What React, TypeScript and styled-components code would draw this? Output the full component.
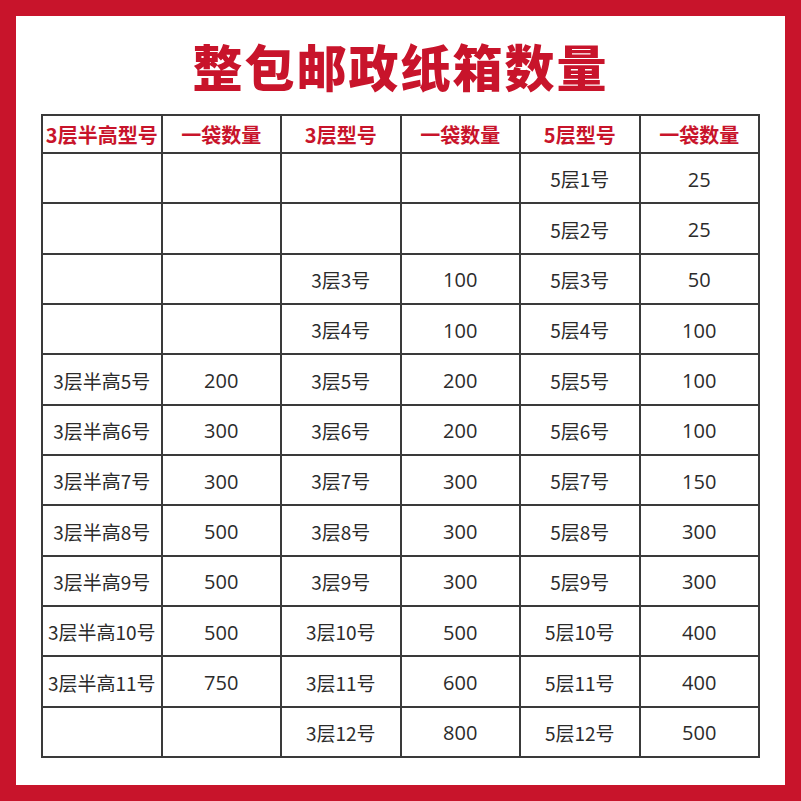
import React from "react";
import styled, { createGlobalStyle } from "styled-components";

const RED = "#c8142b";
const LINE = "#3a3a3a";

const HEADERS = ["3层半高型号", "一袋数量", "3层型号", "一袋数量", "5层型号", "一袋数量"];

const ROWS: string[][] = [
  ["", "", "", "", "5层1号", "25"],
  ["", "", "", "", "5层2号", "25"],
  ["", "", "3层3号", "100", "5层3号", "50"],
  ["", "", "3层4号", "100", "5层4号", "100"],
  ["3层半高5号", "200", "3层5号", "200", "5层5号", "100"],
  ["3层半高6号", "300", "3层6号", "200", "5层6号", "100"],
  ["3层半高7号", "300", "3层7号", "300", "5层7号", "150"],
  ["3层半高8号", "500", "3层8号", "300", "5层8号", "300"],
  ["3层半高9号", "500", "3层9号", "300", "5层9号", "300"],
  ["3层半高10号", "500", "3层10号", "500", "5层10号", "400"],
  ["3层半高11号", "750", "3层11号", "600", "5层11号", "400"],
  ["", "", "3层12号", "800", "5层12号", "500"],
];

const App = () => (
  <>
    <GlobalStyle />
    <Frame>
      <Title>整包邮政纸箱数量</Title>
      <Table>
        <colgroup>
          {HEADERS.map((_, i) => (
            <col key={i} />
          ))}
        </colgroup>
        <thead>
          <tr>
            {HEADERS.map((h, i) => (
              <HeadCell key={i}>{h}</HeadCell>
            ))}
          </tr>
        </thead>
        <tbody>
          {ROWS.map((row, r) => (
            <tr key={r}>
              {row.map((cell, c) => (
                <Cell key={c} $numeric={c % 2 === 1}>
                  {cell}
                </Cell>
              ))}
            </tr>
          ))}
        </tbody>
      </Table>
    </Frame>
  </>
);

export default App;

const GlobalStyle = createGlobalStyle`
  html, body {
    margin: 0;
    padding: 0;
    background: #fff;
  }
  body {
    font-family: "Noto Sans CJK SC", "Noto Sans", sans-serif;
  }
`;

const Frame = styled.div`
  width: 801px;
  height: 801px;
  box-sizing: border-box;
  border: 16px solid ${RED};
  background: #fff;
  padding: 0 25px 25px 25px;
  display: flex;
  flex-direction: column;
  align-items: center;
`;

const Title = styled.h1`
  margin: 0;
  flex: none;
  height: 98px;
  display: flex;
  align-items: center;
  justify-content: center;
  color: ${RED};
  font-size: 50px;
  font-weight: 900;
  letter-spacing: 2px;
  line-height: 1;
`;

const Table = styled.table`
  width: 719px;
  table-layout: fixed;
  border-collapse: collapse;
  border: 2px solid ${LINE};

  col {
    width: 16.666%;
  }
`;

const HeadCell = styled.th`
  height: 36px;
  padding: 0;
  border: 2px solid ${LINE};
  color: ${RED};
  font-size: 20px;
  font-weight: 700;
  text-align: center;
  vertical-align: middle;
  white-space: nowrap;
`;

const Cell = styled.td<{ $numeric?: boolean }>`
  height: 45.33px;
  padding: 3px 0 0;
  border: 2px solid ${LINE};
  color: #2b2b2b;
  font-family: ${(p) =>
    p.$numeric
      ? `"Open Sans", "Noto Sans CJK SC", sans-serif`
      : `"Noto Sans CJK SC", sans-serif`};
  font-size: ${(p) => (p.$numeric ? "20px" : "19px")};
  line-height: 1.2;
  font-weight: 400;
  text-align: center;
  vertical-align: middle;
  white-space: nowrap;
`;
